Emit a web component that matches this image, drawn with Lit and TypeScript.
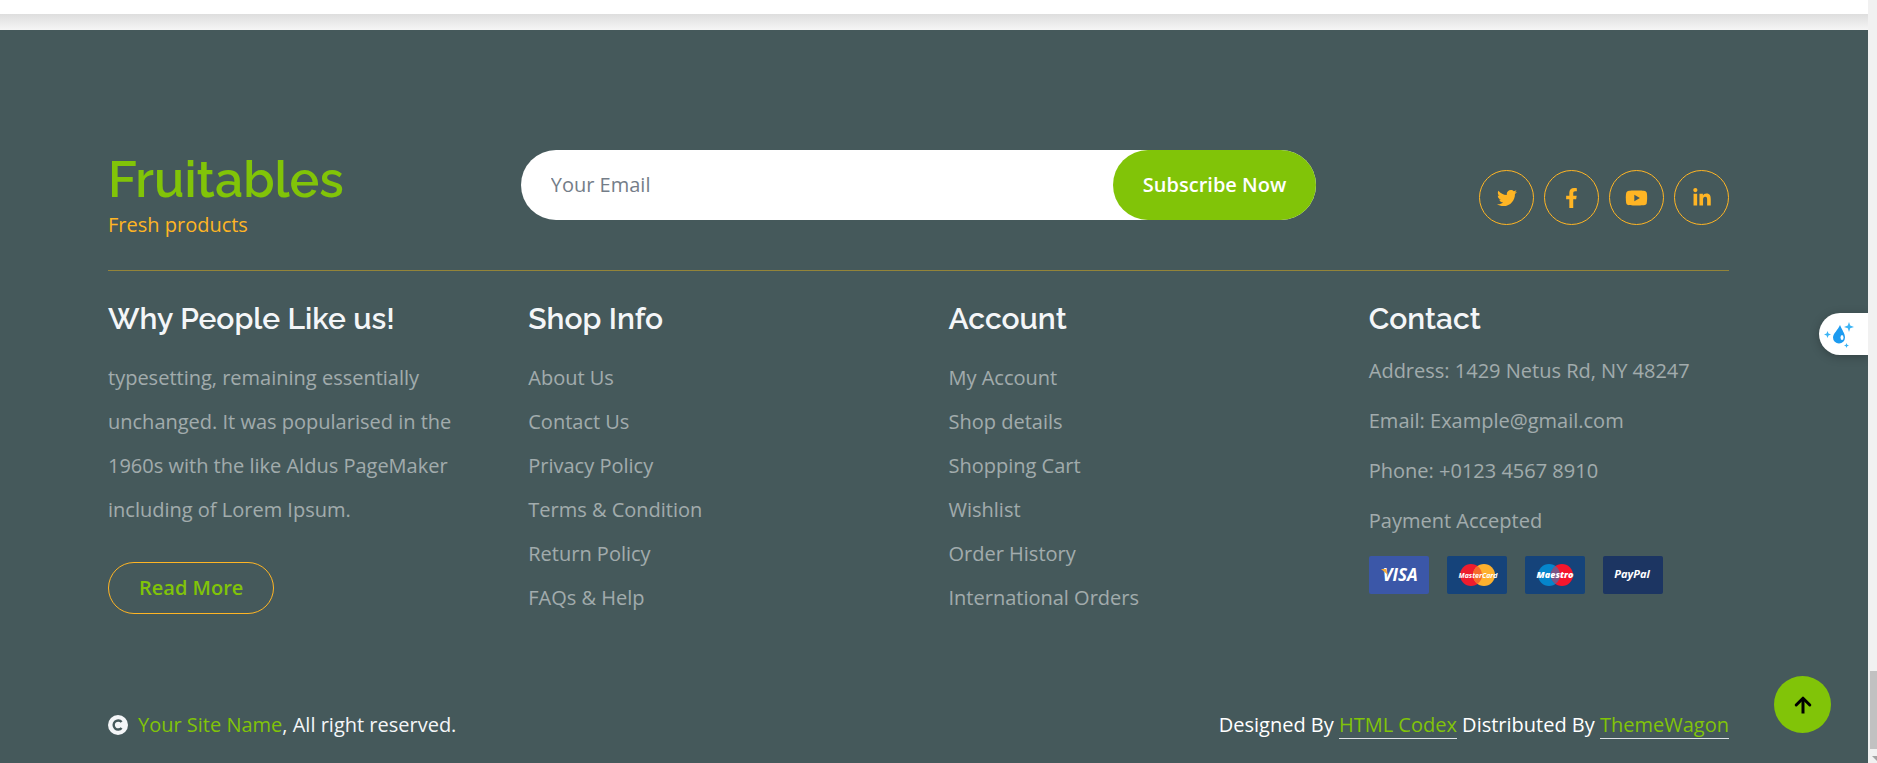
import { LitElement, html, css, svg } from "lit";
import { customElement } from "lit/decorators.js";

const shopLinks = ["About Us", "Contact Us", "Privacy Policy", "Terms & Condition", "Return Policy", "FAQs & Help"];
const accountLinks = ["My Account", "Shop details", "Shopping Cart", "Wishlist", "Order History", "International Orders"];

const socials = [
  {
    name: "Twitter",
    box: "0 0 512 512",
    width: 20,
    path: "M459.37 151.716c.325 4.548.325 9.097.325 13.645 0 138.72-105.583 298.558-298.558 298.558-59.452 0-114.68-17.219-161.137-47.106 8.447.974 16.568 1.299 25.34 1.299 49.055 0 94.213-16.568 130.274-44.832-46.132-.975-84.792-31.188-98.112-72.772 6.498.974 12.995 1.624 19.818 1.624 9.421 0 18.843-1.3 27.614-3.573-48.081-9.747-84.143-51.98-84.143-102.985v-1.299c13.969 7.797 30.214 12.67 47.431 13.319-28.264-18.843-46.781-51.005-46.781-87.391 0-19.492 5.197-37.36 14.294-52.954 51.655 63.675 129.3 105.258 216.365 109.807-1.624-7.797-2.599-15.918-2.599-24.04 0-57.828 46.782-104.934 104.934-104.934 30.213 0 57.502 12.67 76.67 33.137 23.715-4.548 46.456-13.32 66.599-25.34-7.798 24.366-24.366 44.833-46.132 57.827 21.117-2.273 41.584-8.122 60.426-16.243-14.292 20.791-32.161 39.308-52.628 54.253z",
  },
  {
    name: "Facebook",
    box: "0 0 320 512",
    width: 13,
    path: "M279.14 288l14.22-92.66h-88.91v-60.13c0-25.35 12.42-50.06 52.24-50.06h40.42V6.26S260.43 0 225.36 0c-73.22 0-121.08 44.38-121.08 124.72v70.62H22.89V288h81.39v224h100.17V288z",
  },
  {
    name: "YouTube",
    box: "0 0 576 512",
    width: 23,
    path: "M549.655 124.083c-6.281-23.65-24.787-42.276-48.284-48.597C458.781 64 288 64 288 64S117.22 64 74.629 75.486c-23.497 6.322-42.003 24.947-48.284 48.597-11.412 42.867-11.412 132.305-11.412 132.305s0 89.438 11.412 132.305c6.281 23.65 24.787 41.5 48.284 47.821C117.22 448 288 448 288 448s170.78 0 213.371-11.486c23.497-6.321 42.003-24.171 48.284-47.821 11.412-42.867 11.412-132.305 11.412-132.305s0-89.438-11.412-132.305zm-317.51 213.508V175.185l142.739 81.205-142.739 81.201z",
  },
  {
    name: "LinkedIn",
    box: "0 0 448 512",
    width: 18,
    path: "M100.28 448H7.4V148.9h92.88zM53.79 108.1C24.09 108.1 0 83.5 0 53.8a53.79 53.79 0 0 1 107.58 0c0 29.7-24.1 54.3-53.79 54.3zM447.9 448h-92.68V302.4c0-34.7-.7-79.2-48.29-79.2-48.29 0-55.69 37.7-55.69 76.7V448h-92.78V148.9h89.08v40.8h1.3c12.4-23.5 42.69-48.3 87.88-48.3 94 0 111.28 61.9 111.28 142.3V448z",
  },
];

const cards = [
  {
    fill: "#3b57a8",
    art: svg`<text x="31" y="25" text-anchor="middle" font-size="17" font-weight="700" font-style="italic">VISA</text><path d="M12 13h5l2 6z" fill="#f2a93b"/>`,
  },
  {
    fill: "#15437a",
    art: svg`<circle cx="24" cy="19" r="11" fill="#ee1c2e"/><circle cx="37" cy="19" r="11" fill="#fdb02d"/><path d="M30.500 10.100a11 11 0 0 1 0 17.800a11 11 0 0 1 0-17.800z" fill="#f5692c"/><text x="31" y="22" text-anchor="middle" font-size="7" font-weight="700" font-style="italic">MasterCard</text>`,
  },
  {
    fill: "#15437a",
    art: svg`<circle cx="24" cy="19" r="11" fill="#0585cc"/><circle cx="37" cy="19" r="11" fill="#f4162c"/><path d="M30.500 10.100a11 11 0 0 1 0 17.800a11 11 0 0 1 0-17.800z" fill="#7a5685"/><text x="30" y="22" text-anchor="middle" font-size="9" font-weight="800" font-style="italic">Maestro</text>`,
  },
  {
    fill: "#1c3562",
    art: svg`<text x="29" y="22" text-anchor="middle" font-size="11" font-weight="700" font-style="italic">PayPal</text>`,
  },
];

@customElement("app-root")
export class AppRoot extends LitElement {
  static styles = css`
    :host {
      display: block;
      min-height: 100vh;
      padding-right: 9px;
      background: #45595b;
      color: #f4f6f8;
      font: 400 20px/30px "Open Sans", sans-serif;
      --primary: #81c408;
      --secondary: #ffb524;
      --muted: rgba(255, 255, 255, 0.5);
    }
    * { box-sizing: border-box; }
    h1, h2, p, ul { margin: 0; padding: 0; }
    a { text-decoration: none; }
    h1, h2 { font-family: Raleway, Lato, sans-serif; font-weight: 600; }
    .top { height: 14px; background: #fff; }
    .shade { height: 16px; background: linear-gradient(#dedede, #f6f6f6); }
    footer { padding: 120px 139px 20px 108px; }
    .masthead {
      display: grid;
      grid-template-columns: repeat(4, 1fr);
      gap: 30px;
      padding-bottom: 30px;
      border-bottom: 1px solid rgba(226, 175, 24, 0.5);
    }
    .brand h1 { font-size: 50px; line-height: 60px; color: var(--primary); }
    .brand p { color: var(--secondary); }
    form {
      grid-column: span 2;
      display: flex;
      height: 70px;
      border-radius: 35px;
      background: #fff;
    }
    input {
      flex: 1;
      min-width: 0;
      border: 0;
      padding: 0 30px;
      border-radius: 35px;
      background: transparent;
      font: inherit;
      color: #45595b;
    }
    input::placeholder { color: #747d88; opacity: 1; }
    form button {
      border: 0;
      padding: 0 30px;
      border-radius: 35px;
      background: var(--primary);
      color: #fff;
      font: inherit;
      font-weight: 600;
    }
    .socials { display: flex; justify-content: flex-end; gap: 10px; padding-top: 20px; }
    .socials a {
      display: grid;
      place-items: center;
      width: 55px;
      height: 55px;
      border: 1px solid var(--secondary);
      border-radius: 50%;
    }
    .socials svg { height: 20px; fill: var(--secondary); }
    .columns {
      display: grid;
      grid-template-columns: repeat(4, 1fr);
      gap: 60px;
      padding-top: 30px;
      color: var(--muted);
    }
    h2 { margin-bottom: 20px; font-size: 30px; line-height: 35px; color: #f4f6f8; }
    .about p { margin-bottom: 30px; line-height: 44px; }
    .more {
      display: inline-block;
      padding: 10px 30px;
      border: 1px solid var(--secondary);
      border-radius: 26px;
      color: var(--primary);
      font-weight: 600;
    }
    .links { list-style: none; line-height: 44px; }
    .links a { color: inherit; }
    .contact p { margin-bottom: 20px; }
    .cards { display: flex; gap: 18px; }
    .cards svg { width: 60px; height: 38px; fill: #fff; }
    .legal { display: flex; justify-content: space-between; padding-top: 90px; }
    .site { display: flex; align-items: center; }
    .site svg { width: 20px; height: 20px; margin-right: 10px; }
    .legal a { color: var(--primary); }
    .credit { color: #fff; }
    .credit a { border-bottom: 1px solid #dee2e6; }
    .to-top {
      position: fixed;
      right: 46px;
      bottom: 30px;
      display: grid;
      place-items: center;
      width: 57px;
      height: 57px;
      border-radius: 50%;
      background: var(--primary);
    }
    .widget {
      position: fixed;
      right: 9px;
      top: 313px;
      width: 49px;
      height: 42px;
      padding: 0;
      border: 0;
      border-radius: 21px 0 0 21px;
      background: #fff;
      box-shadow: 0 2px 10px rgba(0, 0, 0, 0.25);
      text-align: left;
    }
    .widget svg { display: block; }
    .scroll {
      position: fixed;
      inset: 0 0 0 auto;
      width: 9px;
      display: flex;
      flex-direction: column;
      align-items: flex-end;
      justify-content: flex-end;
      background: #f1f1f1;
    }
    .thumb { width: 7px; height: 78px; background: #c1c1c1; }
    .scroll svg { display: block; }
  `;

  private linkList(items: string[]) {
    return html`<ul class="links">${items.map((t) => html`<li><a href="#">${t}</a></li>`)}</ul>`;
  }

  render() {
    return html`
      <div class="top"></div>
      <div class="shade"></div>
      <footer>
        <div class="masthead">
          <a class="brand" href="#"><h1>Fruitables</h1><p>Fresh products</p></a>
          <form @submit=${(e: Event) => e.preventDefault()}>
            <input type="email" placeholder="Your Email" aria-label="Your Email" />
            <button type="submit">Subscribe Now</button>
          </form>
          <div class="socials">
            ${socials.map(
              (s) => html`<a href="#" aria-label=${s.name}><svg viewBox=${s.box} width=${s.width}><path d=${s.path} /></svg></a>`
            )}
          </div>
        </div>
        <div class="columns">
          <section class="about">
            <h2>Why People Like us!</h2>
            <p>typesetting, remaining essentially unchanged. It was popularised in the 1960s with the like Aldus PageMaker including of Lorem Ipsum.</p>
            <a class="more" href="#">Read More</a>
          </section>
          <section><h2>Shop Info</h2>${this.linkList(shopLinks)}</section>
          <section><h2>Account</h2>${this.linkList(accountLinks)}</section>
          <section class="contact">
            <h2>Contact</h2>
            <p>Address: 1429 Netus Rd, NY 48247</p>
            <p>Email: Example@gmail.com</p>
            <p>Phone: +0123 4567 8910</p>
            <p>Payment Accepted</p>
            <div class="cards">
              ${cards.map(
                (c) => html`<svg viewBox="0 0 60 38"><rect width="60" height="38" rx="2" fill=${c.fill} />${c.art}</svg>`
              )}
            </div>
          </section>
        </div>
        <div class="legal">
          <div class="site">
            <svg viewBox="0 0 20 20"><circle cx="10" cy="10" r="10" fill="#f4f6f8" /><path d="M13.600 12.900A4.500 4.500 0 1 1 13.600 7.100" fill="none" stroke="#45595b" stroke-width="2.400" /></svg>
            <span><a href="#">Your Site Name</a>, All right reserved.</span>
          </div>
          <div class="credit">Designed By <a href="#">HTML Codex</a> Distributed By <a href="#">ThemeWagon</a></div>
        </div>
      </footer>
      <a class="to-top" href="#" aria-label="Back to top">
        <svg width="20" height="20" viewBox="0 0 20 20" fill="none" stroke="#000" stroke-width="3"><path d="M10 18.500V3.500" /><path d="M3.200 10L10 3.200L16.800 10" stroke-linecap="round" stroke-linejoin="round" /></svg>
      </a>
      <button class="widget" aria-label="Assistant">
        <svg width="40" height="42" viewBox="0 0 40 42" fill="#1d9bf0">
          <path d="M21 12c2 5 5 8.500 5 12.500a6 6 0 0 1-12 0C14 20.500 19 17 21 12z" />
          <ellipse cx="23" cy="24.500" rx="1.500" ry="2.500" fill="#fff" />
          <g fill="#3cb4f5"><path d="M30 9l1.200 3.600L35 14l-3.800 1.300L30 19l-1.200-3.700L25 14l3.800-1.400z" /><path d="M8.500 18l1 2.400 2.500 1-2.500 1-1 2.600-1-2.600-2.500-1 2.500-1z" /><path d="M27.500 30l.7 1.800 1.800.7-1.800.7-.7 1.800-.7-1.800-1.800-.7 1.800-.7z" /></g>
        </svg>
      </button>
      <div class="scroll" aria-hidden="true">
        <div class="thumb"></div>
        <svg width="7" height="14" viewBox="0 0 7 14"><path d="M2 7H7V12z" fill="#a3a3a3" /></svg>
      </div>
    `;
  }
}
